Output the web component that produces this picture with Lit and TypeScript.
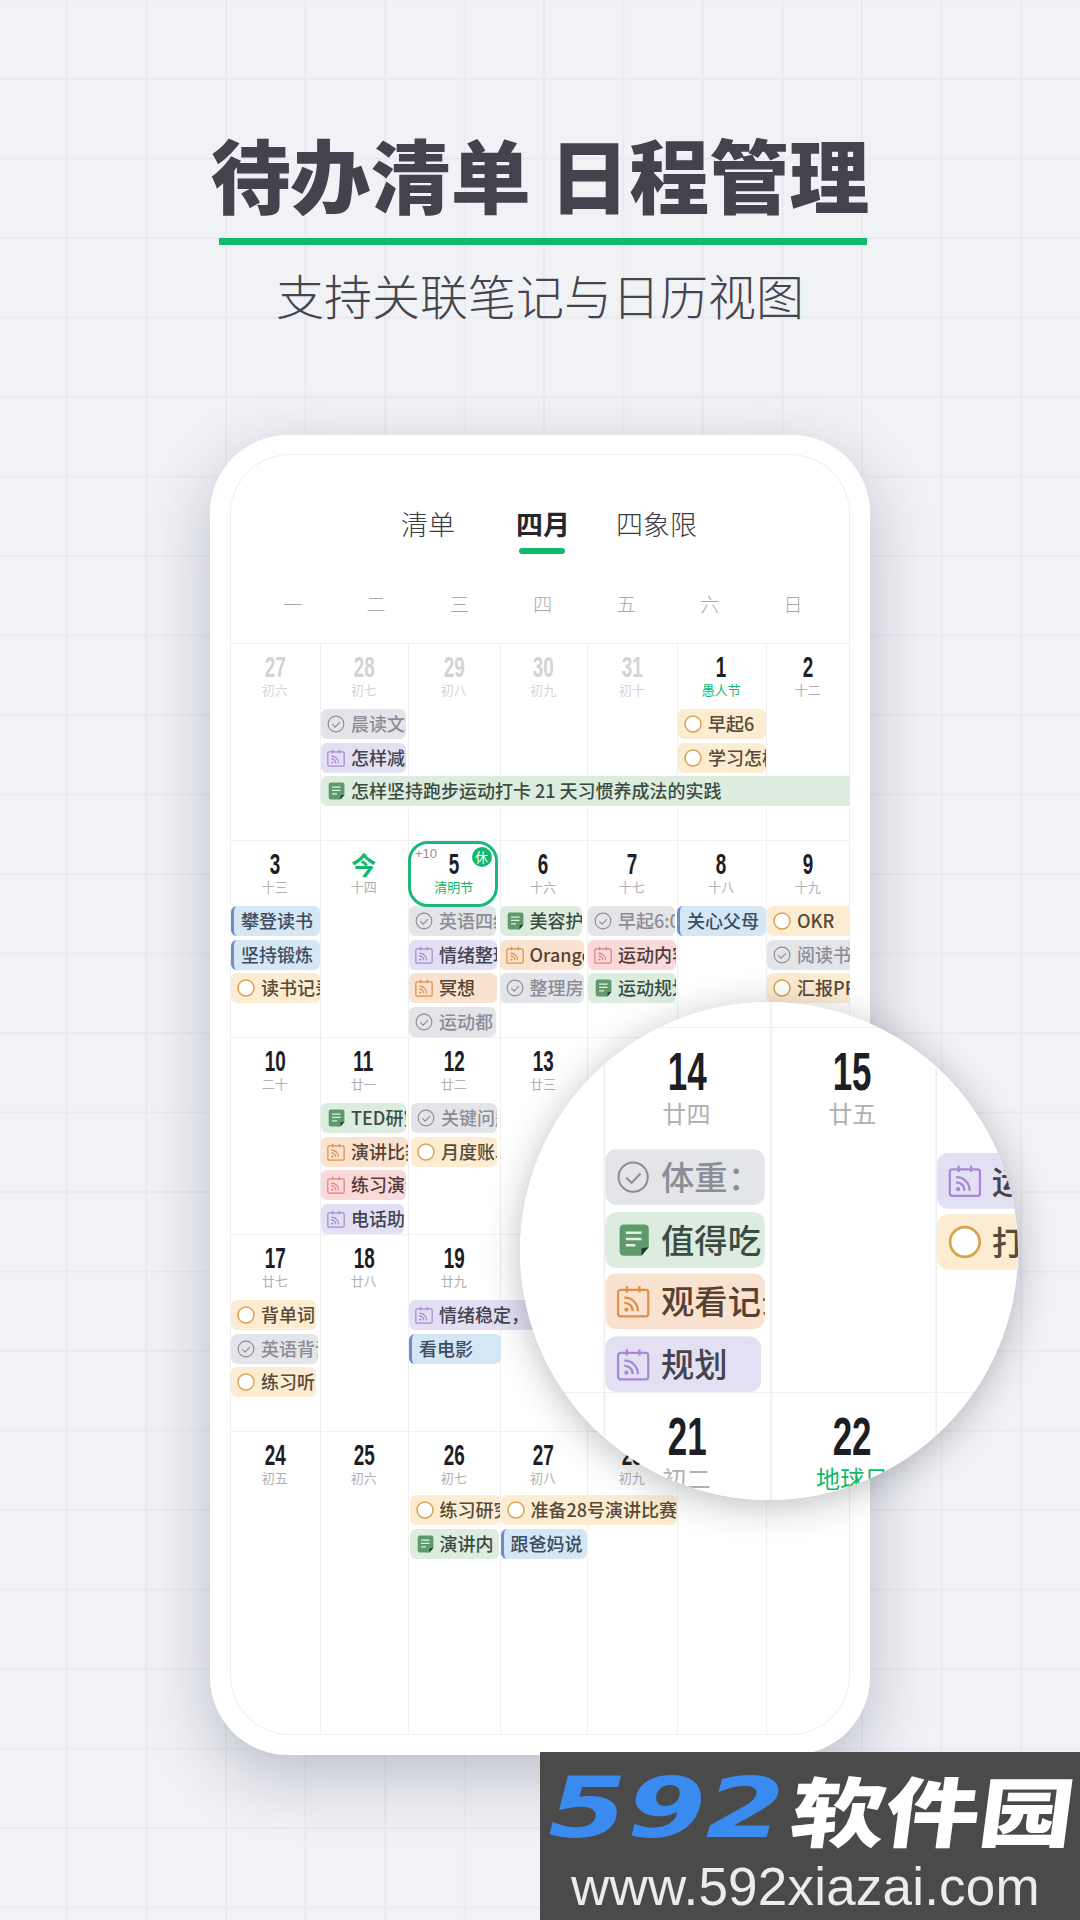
import { LitElement, html, css, svg } from "lit";
import { customElement } from "lit/decorators.js";

type Kind = "grey" | "purple" | "green" | "orange" | "yellow" | "red" | "blue";
interface Chip { col: number; row: number; span?: number; kind: Kind; text: string; l: number; r: number; dy?: number; flat?: boolean; }
interface Day { n: string; lunar: string; dim?: boolean; fest?: boolean; today?: boolean; selected?: boolean; }
interface Week { head: number; days: Day[]; chips: Chip[]; fill?: boolean; }

const BOUNDS = [231, 320.5, 409, 500.5, 587.5, 678, 766.5, 851];
const COLS = BOUNDS.slice(1).map((b, i) => `${b - BOUNDS[i]}px`).join(" ");

const d = (n: string, lunar: string, o: Partial<Day> = {}): Day => ({ n, lunar, ...o });

const WEEKS: Week[] = [
  {
    head: 62.5,
    days: [
      d("27", "初六", { dim: true }), d("28", "初七", { dim: true }), d("29", "初八", { dim: true }),
      d("30", "初九", { dim: true }), d("31", "初十", { dim: true }), d("1", "愚人节", { fest: true }), d("2", "十二"),
    ],
    chips: [
      { col: 1, row: 0, kind: "grey", text: "晨读文章", l: 322, r: 407 },
      { col: 1, row: 1, kind: "purple", text: "怎样减肥", l: 322, r: 407 },
      { col: 5, row: 0, kind: "yellow", text: "早起6", l: 679, r: 767 },
      { col: 5, row: 1, kind: "yellow", text: "学习怎样", l: 679, r: 767 },
      { col: 1, row: 2, span: 6, kind: "green", text: "怎样坚持跑步运动打卡 21 天习惯养成法的实践", l: 322, r: 851, flat: true },
    ],
  },
  {
    head: 62.5,
    days: [
      d("3", "十三"), d("今", "十四", { today: true }), d("5", "清明节", { selected: true, fest: true }),
      d("6", "十六"), d("7", "十七"), d("8", "十八"), d("9", "十九"),
    ],
    chips: [
      { col: 0, row: 0, kind: "blue", text: "攀登读书", l: 232, r: 321 },
      { col: 0, row: 1, kind: "blue", text: "坚持锻炼", l: 232, r: 321 },
      { col: 0, row: 2, kind: "yellow", text: "读书记录", l: 232, r: 321 },
      { col: 2, row: 0, kind: "grey", text: "英语四级", l: 410, r: 497 },
      { col: 2, row: 1, kind: "purple", text: "情绪整理", l: 410, r: 498 },
      { col: 2, row: 2, kind: "orange", text: "冥想", l: 410, r: 498 },
      { col: 2, row: 3, kind: "grey", text: "运动都", l: 410, r: 497 },
      { col: 3, row: 0, kind: "green", text: "美容护肤", l: 500.5, r: 583 },
      { col: 3, row: 1, kind: "orange", text: "Orange", l: 500.5, r: 585 },
      { col: 3, row: 2, kind: "grey", text: "整理房间", l: 500.5, r: 585 },
      { col: 4, row: 0, kind: "grey", text: "早起6:00", l: 589, r: 676 },
      { col: 4, row: 1, kind: "red", text: "运动内容", l: 589, r: 677 },
      { col: 4, row: 2, kind: "green", text: "运动规划", l: 589, r: 677 },
      { col: 5, row: 0, kind: "blue", text: "关心父母", l: 678, r: 767 },
      { col: 6, row: 0, kind: "yellow", text: "OKR", l: 768, r: 851, flat: true },
      { col: 6, row: 1, kind: "grey", text: "阅读书籍", l: 768, r: 851, flat: true },
      { col: 6, row: 2, kind: "yellow", text: "汇报PPT", l: 768, r: 851, flat: true },
    ],
  },
  {
    head: 62.5,
    days: [
      d("10", "二十"), d("11", "廿一"), d("12", "廿二"), d("13", "廿三"), d("14", "廿四"), d("15", "廿五"), d("16", "廿六"),
    ],
    chips: [
      { col: 1, row: 0, kind: "green", text: "TED研究", l: 322, r: 407 },
      { col: 1, row: 1, kind: "orange", text: "演讲比赛", l: 322, r: 409 },
      { col: 1, row: 2, kind: "red", text: "练习演讲", l: 322, r: 407 },
      { col: 1, row: 3, kind: "purple", text: "电话助手", l: 322, r: 405 },
      { col: 2, row: 0, kind: "grey", text: "关键问题", l: 412, r: 498 },
      { col: 2, row: 1, kind: "yellow", text: "月度账单", l: 412, r: 498 },
      { col: 4, row: 0, kind: "grey", text: "体重： 58kg", l: 589, r: 675 },
      { col: 4, row: 1, kind: "green", text: "值得吃", l: 589, r: 675 },
      { col: 4, row: 2, kind: "orange", text: "观看记录", l: 589, r: 675 },
      { col: 4, row: 3, kind: "purple", text: "规划", l: 589, r: 673 },
      { col: 6, row: 0, kind: "purple", text: "运动", l: 767.5, r: 851, dy: 1.6 },
      { col: 6, row: 1, kind: "yellow", text: "打卡", l: 767.5, r: 851, dy: 1.6 },
    ],
  },
  {
    head: 62.5,
    days: [
      d("17", "廿七"), d("18", "廿八"), d("19", "廿九"), d("20", "三十"), d("21", "初二"), d("22", "地球日", { fest: true }), d("23", "初四"),
    ],
    chips: [
      { col: 0, row: 0, kind: "yellow", text: "背单词", l: 232, r: 317 },
      { col: 0, row: 1, kind: "grey", text: "英语背诵", l: 232, r: 319 },
      { col: 0, row: 2, kind: "yellow", text: "练习听力", l: 232, r: 317 },
      { col: 2, row: 0, span: 2, kind: "purple", text: "情绪稳定，", l: 410, r: 585 },
      { col: 2, row: 1, kind: "blue", text: "看电影", l: 410, r: 501.5 },
    ],
  },
  {
    head: 60.5,
    fill: true,
    days: [
      d("24", "初五"), d("25", "初六"), d("26", "初七"), d("27", "初八"), d("28", "初九"), d("29", "初十"), d("30", "十一"),
    ],
    chips: [
      { col: 2, row: 0, kind: "yellow", text: "练习研究", l: 410.5, r: 500.5 },
      { col: 2, row: 1, kind: "green", text: "演讲内", l: 410.5, r: 500 },
      { col: 3, row: 0, span: 2, kind: "yellow", text: "准备28号演讲比赛", l: 501.5, r: 677.5 },
      { col: 3, row: 1, kind: "blue", text: "跟爸妈说", l: 501.5, r: 587.5 },
    ],
  },
];

const icon = (kind: Kind) => {
  if (kind === "blue") return null;
  const body =
    kind === "grey"
      ? svg`<circle cx="16" cy="16" r="14" fill="none" stroke="currentColor" stroke-width="2"/><path d="M9.5 16.5l5 5 8.5-9" fill="none" stroke="currentColor" stroke-width="2"/>`
      : kind === "yellow"
      ? svg`<circle cx="16" cy="16" r="14.2" fill="#fff" stroke="currentColor" stroke-width="2.6"/>`
      : kind === "green"
      ? svg`<path d="M7 1h20a4 4 0 0 1 4 4v17.5L24 31H7a4 4 0 0 1-4-4V5a4 4 0 0 1 4-4z" fill="currentColor"/><path d="M9 9h15M9 15h15M9 21h9" stroke="#e4f1e6" stroke-width="2.4" fill="none"/><path d="M24 24l7-1.5L24 31z" fill="#24382a"/>`
      : svg`<rect x="1.5" y="5" width="29" height="25.5" rx="2.5" fill="none" stroke="currentColor" stroke-width="2.2"/><path d="M10 1.5v6M22 1.5v6" stroke="currentColor" stroke-width="2.2" fill="none"/><circle cx="9.5" cy="24" r="2" fill="currentColor"/><path d="M7.5 17.5a7.5 7.5 0 0 1 8 8M7.5 12.5a12.5 12.5 0 0 1 13 13" fill="none" stroke="currentColor" stroke-width="2.2"/>`;
  return html`<svg class="ic" viewBox="0 0 32 32">${body}</svg>`;
};

const chipTpl = (c: Chip) => {
  const span = c.span ?? 1;
  const ml = c.l - BOUNDS[c.col];
  const mr = BOUNDS[c.col + span] - c.r;
  const style = `grid-column:${c.col + 1} / span ${span};grid-row:${c.row + 2};margin:${c.dy ?? 0}px ${mr}px 0 ${ml}px`;
  return html`<div class="chip ${c.kind} ${c.flat ? "flat" : ""}" style=${style}>${icon(c.kind)}<span>${c.text}</span></div>`;
};

const dayTpl = (day: Day, i: number) => html`
  ${i > 0 ? html`<div class="line" style="grid-column:${i + 1}"></div>` : null}
  <div class="head ${day.dim ? "dim" : ""} ${day.fest ? "fest" : ""}" style="grid-column:${i + 1}">
    ${day.selected
      ? html`<div class="sel"></div><span class="more">+10</span><span class="rest">休</span>`
      : null}
    <div class="num ${day.today ? "now" : ""}"><b>${day.n}</b></div>
    <div class="lunar">${day.lunar}</div>
  </div>
`;

const weekTpl = (w: Week) => html`
  <div class="week ${w.fill ? "fill" : ""}" style="grid-template-columns:${COLS};grid-template-rows:${w.head}px repeat(3,30px) 1fr">
    ${w.days.map(dayTpl)} ${w.chips.map(chipTpl)}
  </div>
`;

@customElement("app-root")
export class AppRoot extends LitElement {
  static styles = css`
    :host {
      display: block;
      position: relative;
      width: 1080px;
      height: 1920px;
      overflow: hidden;
      font-family: "Noto Sans CJK SC", "Noto Sans", sans-serif;
      background-color: #f1f2f6;
      background-image: linear-gradient(#e9eaef 2px, transparent 2px), linear-gradient(90deg, #e9eaef 2px, transparent 2px);
      background-size: 79.5px 79.5px;
      background-position: 66px 78px;
    }
    .page {
      display: flex;
      flex-direction: column;
      align-items: center;
      padding-top: 132px;
    }
    h1 {
      margin: 0;
      font-size: 80px;
      line-height: 80px;
      font-weight: 900;
      color: #43434d;
      white-space: pre;
    }
    .bar {
      width: 648px;
      height: 7px;
      margin: 26px 0 0 5px;
      background: #10b96e;
    }
    .sub {
      margin-top: 25px;
      font-size: 48px;
      line-height: 48px;
      font-weight: 300;
      color: #45454d;
    }
    .phone {
      margin-top: 117px;
      width: 660px;
      height: 1320px;
      box-sizing: border-box;
      padding: 19px 20px 20px;
      background: #fff;
      border-radius: 78px;
      box-shadow: 0 22px 64px rgba(70, 74, 100, 0.3);
    }
    .screen {
      height: 100%;
      border-radius: 60px;
      box-shadow: inset 0 0 0 1px #efeff2;
      overflow: hidden;
      position: relative;
    }
    .tabs {
      display: flex;
      padding: 56px 0 0 171px;
      font-size: 27px;
      line-height: 27px;
      font-weight: 300;
      color: #3b3b42;
    }
    .tabs span:nth-child(2) {
      position: relative;
      margin: 0 46px 0 61px;
      font-weight: 700;
      color: #26262c;
    }
    .tabs span:nth-child(2)::after {
      content: "";
      position: absolute;
      left: 3px;
      right: 5px;
      top: 38px;
      height: 6px;
      border-radius: 3px;
      background: #10b96e;
    }
    .weekdays {
      display: grid;
      grid-template-columns: repeat(7, 83.4px);
      padding: 57px 0 0 21px;
      font-size: 19px;
      line-height: 20px;
      text-align: center;
      font-weight: 300;
      color: #a9a9ad;
    }
    .cal {
      margin-top: 29px;
    }
    .week {
      display: grid;
      row-gap: 3.5px;
      height: 197px;
      box-shadow: inset 0 var(--line, 1px) 0 #f0f0f3;
    }
    .week.fill {
      height: 304px;
    }
    .line {
      grid-row: 1 / -1;
      border-left: var(--line, 1px) solid #f0f0f3;
    }
    .head {
      grid-row: 1;
      position: relative;
      display: flex;
      flex-direction: column;
      align-items: center;
      padding-top: 10px;
      color: #1d1d24;
    }
    .num {
      height: 28px;
      line-height: 28px;
      font-family: "Liberation Sans", sans-serif;
      font-size: 29px;
    }
    .num b {
      display: inline-block;
      transform: scaleX(0.65);
    }
    .num.now {
      font-family: "Noto Sans CJK SC", sans-serif;
      font-size: 25px;
      color: #10b96e;
    }
    .num.now b {
      transform: none;
    }
    .lunar {
      margin-top: 1px;
      font-size: 13px;
      line-height: 16px;
      color: #b0b0b3;
      white-space: nowrap;
    }
    .head.dim .num {
      color: #d3d3d6;
    }
    .head.dim .lunar {
      color: #d6d6d8;
    }
    .head.fest .lunar {
      color: #10b96e;
    }
    .sel {
      position: absolute;
      left: 0;
      right: 2px;
      top: 0.5px;
      height: 66px;
      box-sizing: border-box;
      border: 3px solid #1cb877;
      border-radius: 20px;
    }
    .more {
      position: absolute;
      left: 7px;
      top: 5px;
      font-size: 13px;
      line-height: 18px;
      font-family: "Liberation Sans", sans-serif;
      color: #8f8f94;
    }
    .rest {
      position: absolute;
      right: 8px;
      top: 7px;
      width: 20px;
      height: 20px;
      border-radius: 50%;
      background: #10b96e;
      color: #fff;
      font-size: 13px;
      line-height: 20px;
      text-align: center;
    }
    .chip {
      display: flex;
      align-items: center;
      gap: 6px;
      height: 30px;
      min-width: 0;
      box-sizing: border-box;
      padding-left: 6px;
      border-radius: 6px;
      overflow: hidden;
      white-space: nowrap;
      font-size: 18px;
      font-weight: 500;
      line-height: 28px;
    }
    .chip.flat {
      border-radius: 6px 0 0 6px;
    }
    .chip .ic {
      flex: none;
      width: 18px;
      height: 18px;
    }
    .chip span {
      flex: none;
      margin-top: -2px;
    }
    .grey {
      background: #e4e5e9;
      color: #8c8d96;
    }
    .purple {
      background: #e3e0f3;
      color: #44444f;
    }
    .purple .ic {
      color: #a688d4;
    }
    .green {
      background: #dcecdf;
      color: #3b4c42;
    }
    .green .ic {
      color: #5f9a6d;
    }
    .orange {
      background: #f9e2cf;
      color: #574232;
    }
    .orange .ic {
      color: #dd9149;
    }
    .yellow {
      background: #fcecd2;
      color: #574a38;
    }
    .yellow .ic {
      color: #d9a24e;
    }
    .red {
      background: #f9d9d9;
      color: #523b3b;
    }
    .red .ic {
      color: #e08080;
    }
    .blue {
      background: #d5e6f5;
      color: #3b4d62;
      border-left: 3.5px solid #6a8fc8;
      padding-left: 7px;
    }
    .mag {
      --line: 0.55px;
      position: absolute;
      left: 520px;
      top: 1002px;
      width: 498px;
      height: 498px;
      border-radius: 50%;
      background: #fff;
      overflow: hidden;
    }
    .magshadow {
      position: absolute;
      left: 520px;
      top: 1002px;
      width: 498px;
      height: 498px;
      border-radius: 50%;
      box-shadow: 0 6px 36px rgba(40, 42, 60, 0.3);
    }
    .maginner {
      position: absolute;
      left: -578px;
      top: -340px;
      width: 620px;
      transform: scale(1.853);
      transform-origin: 0 0;
    }
    .mark {
      position: absolute;
      left: 540px;
      top: 1752px;
      width: 540px;
      height: 168px;
      background: #4a4a4a;
      overflow: hidden;
    }
    .logo {
      display: flex;
      height: 112px;
      align-items: center;
    }
    .n592 {
      margin-left: 8px;
      width: 244px;
      font-family: "DejaVu Sans", sans-serif;
      font-weight: 700;
      font-style: italic;
      font-size: 84px;
      line-height: 84px;
      color: #3a8bf0;
      transform: scaleX(1.35);
      transform-origin: 0 50%;
    }
    .cn {
      font-size: 76px;
      line-height: 76px;
      font-weight: 900;
      color: #fff;
      white-space: nowrap;
      transform: scaleX(1.24) skewX(-6deg);
      transform-origin: 0 50%;
    }
    .url {
      margin: -5px 0 0 31px;
      font-family: "Liberation Sans", sans-serif;
      font-size: 53px;
      line-height: 56px;
      letter-spacing: 0.2px;
      color: #ececec;
    }
  `;

  render() {
    return html`
      <div class="page">
        <h1>待办清单 日程管理</h1>
        <div class="bar"></div>
        <div class="sub">支持关联笔记与日历视图</div>
        <div class="phone">
          <div class="screen">
            <div class="tabs"><span>清单</span><span>四月</span><span>四象限</span></div>
            <div class="weekdays">
              ${["一", "二", "三", "四", "五", "六", "日"].map((w) => html`<div>${w}</div>`)}
            </div>
            <div class="cal">${WEEKS.map(weekTpl)}</div>
          </div>
        </div>
      </div>
      <div class="magshadow"></div>
      <div class="mag">
        <div class="maginner">${WEEKS.slice(1, 4).map(weekTpl)}</div>
      </div>
      <div class="mark">
        <div class="logo"><div class="n592">592</div><div class="cn">软件园</div></div>
        <div class="url">www.592xiazai.com</div>
      </div>
    `;
  }
}
